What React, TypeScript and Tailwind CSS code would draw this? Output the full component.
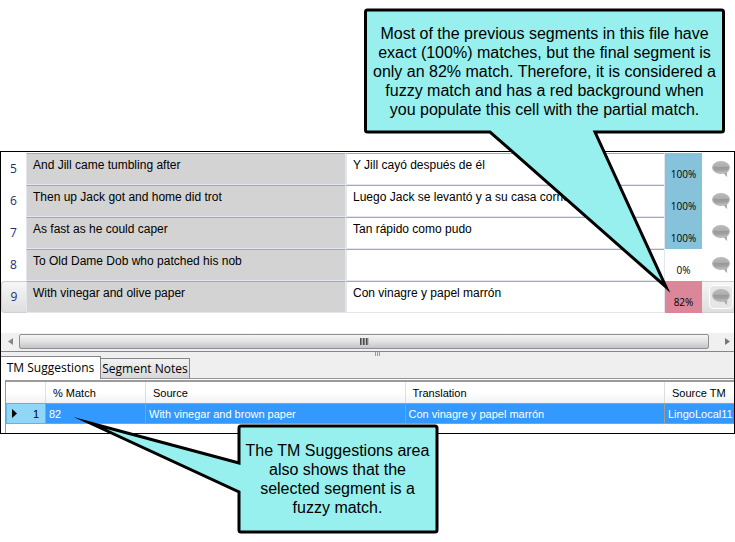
import React from "react";

type Segment = { id: number; source: string; target: string; match: string; tone: string };

const segments: Segment[] = [
  { id: 5, source: "And Jill came tumbling after", target: "Y Jill cayó después de él", match: "100%", tone: "bg-[#86c3da]" },
  { id: 6, source: "Then up Jack got and home did trot", target: "Luego Jack se levantó y a su casa corrió", match: "100%", tone: "bg-[#86c3da]" },
  { id: 7, source: "As fast as he could caper", target: "Tan rápido como pudo", match: "100%", tone: "bg-[#86c3da]" },
  { id: 8, source: "To Old Dame Dob who patched his nob", target: "", match: "0%", tone: "bg-white" },
  { id: 9, source: "With vinegar and olive paper", target: "Con vinagre y papel marrón", match: "82%", tone: "bg-[#dc8699]" },
];

function CommentIcon() {
  return (
    <svg width="18" height="16" viewBox="0 0 18 16" className="block" aria-hidden="true">
      <defs>
        <linearGradient id="bubble" x1="0" y1="0" x2="0" y2="1">
          <stop offset="0" stopColor="#b9b9b9" />
          <stop offset="0.4" stopColor="#aeaeae" />
          <stop offset="0.5" stopColor="#999999" />
          <stop offset="0.75" stopColor="#a2a2a2" />
          <stop offset="1" stopColor="#bcbcbc" />
        </linearGradient>
      </defs>
      <path d="M12 12l.3 1q1.200 2 3 3-.6-2 0-5Z" fill="#ababab" />
      <ellipse cx="9" cy="6.500" rx="9" ry="6.500" fill="#b6b6b6" />
      <ellipse cx="9" cy="6.500" rx="7.800" ry="5.400" fill="url(#bubble)" />
    </svg>
  );
}

function SegmentGrid() {
  return (
    <table className="w-full table-fixed border-separate border-spacing-0 text-[12px] leading-4 text-black">
      <colgroup>
        <col className="w-[25px]" />
        <col />
        <col />
        <col className="w-[38px]" />
        <col className="w-8" />
      </colgroup>
      <tbody>
        {segments.map((s) => {
          const current = s.id === 9;
          return (
            <tr key={s.id} className="h-8">
              <th
                scope="row"
                className={
                  "p-0 text-center align-middle font-['Open_Sans',sans-serif] font-normal text-[#1c2f6b] " +
                  (current ? "rounded-l-sm border border-r-0 border-[#cfcfcf] bg-linear-to-b from-[#f6f6f6] to-[#dedede]" : "")
                }
              >
                {s.id}
              </th>
              <td className="truncate border-t border-b border-l border-t-[#a4a8b4] border-b-[#e3e6ee] border-l-[#e3e6ee] bg-[#d3d3d3] py-0 pt-[3px] pl-[6px] align-top">
                {s.source}
              </td>
              <td className="truncate border-t border-b border-l-2 border-t-[#a4a8b4] border-b-[#e3e6ee] border-l-[#e3e6ee] p-0 pt-[3px] pl-[6px] align-top">
                {s.target}
              </td>
              <td className={"border-l border-l-[#e3e6ee] p-0 pb-[3px] text-center align-bottom font-['Open_Sans',sans-serif] text-[10px] " + s.tone}>
                {s.match}
              </td>
              <td className={"p-0 pb-px " + (current ? "border-y border-[#cfcfcf] bg-linear-to-b from-[#f6f6f6] to-[#dedede]" : "")}>
                <button
                  type="button"
                  aria-label={"Comment on segment " + s.id}
                  className={
                    "ml-[7px] flex h-6 w-6 items-center justify-center " +
                    (current ? "rounded-sm border border-white bg-[#e6e6e6]" : "")
                  }
                >
                  <CommentIcon />
                </button>
              </td>
            </tr>
          );
        })}
      </tbody>
    </table>
  );
}

function ScrollBar() {
  return (
    <div className="mt-5 flex h-[18px] items-center bg-[#f0f0f0] pb-px">
      <button type="button" aria-label="Scroll left" className="flex w-[18px] justify-center">
        <svg width="5" height="7" viewBox="0 0 5 7"><path d="M5 0v7L0 3.500Z" fill="#888" /></svg>
      </button>
      <div className="flex h-[15px] flex-1 items-center justify-center rounded-xs border border-[#909090] bg-linear-to-b from-[#f5f5f5] via-[#e2e2e2] to-[#c4c4c8]">
        <i className="h-[7px] w-[3px] bg-linear-to-r from-[#333] to-[#ddd]" />
        <i className="h-[7px] w-[3px] bg-linear-to-r from-[#333] to-[#ddd]" />
        <i className="h-[7px] w-[3px] bg-linear-to-r from-[#333] to-[#ddd]" />
      </div>
      <button type="button" aria-label="Scroll right" className="flex w-[25px] justify-center pl-3">
        <svg width="5" height="7" viewBox="0 0 5 7"><path d="M0 0v7l5-3.500Z" fill="#777" /></svg>
      </button>
    </div>
  );
}

function Tabs() {
  return (
    <div className="flex h-7 items-end border-t border-b border-t-[#85858f] border-b-[#92929a] bg-[#efefef] font-['Open_Sans',sans-serif] text-[12px] leading-4 text-black">
      <div role="tablist" className="flex items-end">
        <button type="button" role="tab" aria-selected="true" className="-mb-px h-[23px] w-[100px] border-t border-r border-[#85858f] bg-white pb-px whitespace-nowrap">
          TM Suggestions
        </button>
        <button type="button" role="tab" aria-selected="false" className="h-5 w-[89px] border-t border-r border-[#85858f] bg-linear-to-b from-[#f2f2f2] to-[#d8d8d8] whitespace-nowrap">
          Segment Notes
        </button>
      </div>
      <div className="ml-[185px] flex gap-px self-start">
        <i className="h-1 w-px bg-[#999]" />
        <i className="h-1 w-px bg-[#999]" />
        <i className="h-1 w-px bg-[#999]" />
      </div>
    </div>
  );
}

function Suggestions() {
  const head = "border-r border-[#dcdee2] p-0 pl-[7px] text-left font-normal";
  const cell = "border-y border-r border-[#a29c94] p-0 pl-[3px]";
  return (
    <div className="mt-px ml-1 border-t-2 border-l border-[#9b9b9b] pb-[9px]">
      <table className="w-full table-fixed border-separate border-spacing-0 text-[11px] leading-4 whitespace-nowrap">
        <colgroup>
          <col className="w-10" />
          <col className="w-[100px]" />
          <col />
          <col />
          <col className="w-[69px]" />
        </colgroup>
        <thead>
          <tr className="h-[21px] bg-linear-to-b from-white from-50% to-[#f1f2f4] text-black">
            <td className="border-r border-[#dcdee2] p-0" />
            <th scope="col" className={head}>% Match</th>
            <th scope="col" className={head}>Source</th>
            <th scope="col" className={head}>Translation</th>
            <th scope="col" className="p-0 pl-[7px] text-left font-normal">Source TM</th>
          </tr>
        </thead>
        <tbody>
          <tr className="h-[21px] bg-[#3399ff] text-white">
            <th scope="row" className="border border-[#5fb5dc] bg-[#8fd6f7] p-0 font-normal text-black">
              <div className="flex items-center justify-between pr-[6px] pl-[5px]">
                <svg width="5" height="9" viewBox="0 0 5 9"><path d="M0 0v9l5-4.500Z" fill="#000" /></svg>
                1
              </div>
            </th>
            <td className={cell}>82</td>
            <td className={cell}>With vinegar and brown paper</td>
            <td className={cell}>Con vinagre y papel marrón</td>
            <td className="border-y border-[#a29c94] p-0 pl-[3px]">LingoLocal11</td>
          </tr>
        </tbody>
      </table>
    </div>
  );
}

export default function App() {
  return (
    <div className="relative w-full bg-white pt-[151px] pb-[108px] font-['Liberation_Sans',Arial,sans-serif]">
      <main className="border border-black bg-white pt-px">
        <SegmentGrid />
        <ScrollBar />
        <Tabs />
        <Suggestions />
      </main>

      <aside className="absolute top-2 right-2.5 w-[361px] text-black">
        <svg className="absolute top-0 left-0" width="361" height="288" viewBox="0 0 361 288" aria-hidden="true">
          <path d="M3.500 2h354q2 0 2 2v118q0 2-2 2H231L302 279 126 124H3.500q-2 0-2-2V4q0-2 2-2Z" fill="#97f0ee" stroke="#000" strokeWidth="3" strokeLinejoin="miter" strokeMiterlimit="10" />
        </svg>
        <p className="relative px-1 pt-4 text-center text-[16px] leading-[19px] whitespace-nowrap">
          Most of the previous segments in this file have<br />
          exact (100%) matches, but the final segment is<br />
          only an 82% match. Therefore, it is considered a<br />
          fuzzy match and has a red background when<br />
          you populate this cell with the partial match.
        </p>
      </aside>

      <aside className="absolute top-[410px] left-[60px] w-[380px] text-black">
        <svg className="absolute top-0 left-0" width="380" height="126" viewBox="0 0 380 126" aria-hidden="true">
          <path d="M181 16h194q2 0 2 2v102q0 2-2 2H181q-2 0-2-2V82L30 13 179 53V18q0-2 2-2Z" fill="#97f0ee" stroke="#000" strokeWidth="3" strokeLinejoin="miter" strokeMiterlimit="20" />
        </svg>
        <p className="relative pt-[31px] pr-[5px] pl-[180px] text-center text-[16px] leading-[19px] whitespace-nowrap">
          The TM Suggestions area<br />
          also shows that the<br />
          selected segment is a<br />
          fuzzy match.
        </p>
      </aside>
    </div>
  );
}
